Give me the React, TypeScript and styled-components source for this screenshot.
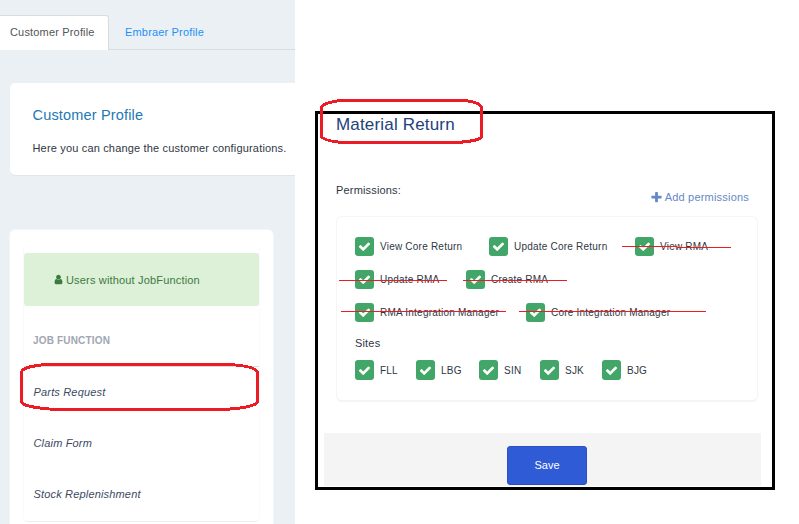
import React from "react";
import styled, { createGlobalStyle } from "styled-components";

const GlobalStyle = createGlobalStyle`
  * { box-sizing: border-box; }
  body {
    margin: 0;
    background: #fff;
    font-family: "Liberation Sans", Arial, sans-serif;
    font-size: 11px;
    letter-spacing: 0.17px;
    color: #2f3744;
    overflow: hidden;
  }
`;

const Page = styled.div`
  position: relative;
  display: flex;
  width: 799px;
  height: 524px;
  overflow: hidden;
`;

const ProfilePane = styled.section`
  width: 295px;
  height: 524px;
  padding-top: 15px;
  overflow: hidden;
  background: #ebf0f4;
`;

const Tabs = styled.nav`
  display: flex;
  height: 35px;
  box-shadow: inset 0 -1px #d9dcde;
`;

const Tab = styled.a<{ $active?: boolean }>`
  padding: 0 14px 0 ${(p) => (p.$active ? "10px" : "16px")};
  width: ${(p) => (p.$active ? "109px" : "auto")};
  line-height: ${(p) => (p.$active ? "33px" : "35px")};
  white-space: nowrap;
  color: ${(p) => (p.$active ? "#555" : "#1e90f8")};
  background: ${(p) => (p.$active ? "#fff" : "transparent")};
  border: ${(p) => (p.$active ? "1px solid #d9dcde" : "0")};
  border-left: 0;
  border-bottom: 0;
  border-radius: 0 3px 0 0;
`;

const IntroCard = styled.div`
  width: 300px;
  height: 92px;
  margin: 33px 0 0 10px;
  padding: 23px 0 0 22.5px;
  background: #fff;
  border-radius: 5px;
  box-shadow: 0 1px 1px #dfe4e8;
  white-space: nowrap;
`;

const IntroTitle = styled.h2`
  margin: 0 0 15px;
  font-size: 14.5px;
  line-height: 18px;
  font-weight: 400;
  color: #2279b4;
`;

const IntroText = styled.p`
  margin: 0;
  line-height: 18px;
`;

const JobCard = styled.div`
  width: 265px;
  height: 310px;
  margin: 54px 0 0 9px;
  padding: 15px 13px 0;
  background: #fff;
  border: 1px solid #f3f6f8;
  border-radius: 6px;
`;

const JobPanel = styled.div`
  height: 277px;
  padding-top: 8px;
  border: 1px solid #f9fafb;
  border-top: 0;
  border-bottom-color: #eceeef;
  border-radius: 5px;
`;

const SuccessBanner = styled.div`
  display: flex;
  align-items: center;
  gap: 2px;
  height: 53px;
  padding-left: 29px;
  color: #3c7a40;
  background: #ddf0d8;
  border-radius: 3px;
`;

const JobHeading = styled.div`
  height: 61px;
  padding: 26px 0 0 9px;
  line-height: 18px;
  font-size: 10px;
  font-weight: 700;
  color: #a1a6b3;
  border-bottom: 1px solid #d9dcdf;
`;

const JobRow = styled.div`
  height: 51px;
  padding-left: 9.5px;
  line-height: 51px;
  font-style: italic;
  color: #3d4963;
`;

const Dialog = styled.section`
  display: flex;
  flex-direction: column;
  width: 460px;
  height: 379px;
  margin: 111px 0 0 20px;
  padding: 0 11px 1px 6px;
  border: 3px solid #000;
`;

const DialogTitle = styled.h1`
  margin: 0;
  padding-left: 12px;
  font-size: 17px;
  line-height: 22px;
  font-weight: 400;
  color: #21427c;
`;

const PermissionsBar = styled.div`
  display: flex;
  justify-content: space-between;
  height: 20px;
  margin: 45px 12px 0 12px;
  line-height: 18px;
`;

const AddLink = styled.a`
  display: flex;
  align-items: center;
  gap: 2px;
  margin-top: 7px;
  height: 18px;
  letter-spacing: 0.2px;
  color: #6488c6;
`;

const PermissionCard = styled.div`
  height: 186px;
  flex: none;
  margin: 15px 3px 0 12px;
  padding: 20px 0 0 18px;
  border: 1px solid #f5f5f6;
  border-bottom: 2px solid #f3f4f5;
  border-radius: 6px;
`;

const OptionRow = styled.div`
  display: flex;
  height: 33px;
`;

const Option = styled.label<{ $width: number; $tall?: boolean }>`
  display: flex;
  gap: 6px;
  width: ${(p) => p.$width}px;
  height: ${(p) => (p.$tall ? 20 : 19)}px;
  line-height: ${(p) => (p.$tall ? 21 : 20)}px;
  font-size: 10px;
  letter-spacing: 0.22px;
  white-space: nowrap;
`;

const CheckBox = styled.span`
  display: flex;
  align-items: center;
  justify-content: center;
  flex: none;
  width: 19px;
  height: 100%;
  background: #42a668;
  border-radius: 3px;
`;

const SitesLabel = styled.div`
  height: 24px;
  line-height: 15px;
`;

const Footer = styled.footer`
  display: flex;
  justify-content: center;
  height: 53px;
  margin-top: 31px;
  padding: 13px 0 1px 9px;
  background: #f4f4f4;
`;

const SaveButton = styled.button`
  width: 80px;
  height: 39px;
  padding: 0 0 2px;
  font: 400 11px "Liberation Sans", Arial, sans-serif;
  letter-spacing: 0;
  color: #fff;
  background: #305bd6;
  border: 1px solid #2a50c2;
  border-radius: 3px;
`;

const Markup = styled.svg`
  position: absolute;
  inset: 0;
  pointer-events: none;
`;

const icons = {
  check:
    "M1671 566q0 40-28 68l-724 724-136 136q-28 28-68 28t-68-28l-136-136-362-362q-28-28-28-68t28-68l136-136q28-28 68-28t68 28l294 295 656-657q28-28 68-28t68 28l136 136q28 28 28 68z",
  plus:
    "M1600 736v192q0 40-28 68t-68 28h-416v416q0 40-28 68t-68 28h-192q-40 0-68-28t-28-68v-416h-416q-40 0-68-28t-28-68v-192q0-40 28-68t68-28h416v-416q0-40 28-68t68-28h192q40 0 68 28t28 68v416h416q40 0 68 28t28 68z",
  user:
    "M1536 1399q0 109-62.5 187t-150.5 78h-854q-88 0-150.5-78t-62.5-187q0-85 8.5-160.5t31.5-152 58.5-131 94-89 134.5-34.5q131 128 313 128t313-128q76 0 134.5 34.5t94 89 58.5 131 31.5 152 8.5 160.5zm-256-887q0 159-112.5 271.5t-271.5 112.5-271.5-112.5-112.5-271.5 112.5-271.5 271.5-112.5 271.5 112.5 112.5 271.5z",
};

function Icon({ name, size, color = "currentColor" }: { name: keyof typeof icons; size: number; color?: string }) {
  return (
    <svg width={size} height={size} viewBox="0 0 1792 1792" fill={color}>
      <path d={icons[name]} />
    </svg>
  );
}

type Item = [label: string, width: number];

const permissionRows: Item[][] = [
  [["View Core Return", 134], ["Update Core Return", 146], ["View RMA", 90]],
  [["Update RMA", 111], ["Create RMA", 100]],
  [["RMA Integration Manager", 171], ["Core Integration Manager", 160]],
];

const sites: Item[] = [["FLL", 61], ["LBG", 63], ["SIN", 61], ["SJK", 62], ["BJG", 60]];

function Options({ items, tall }: { items: Item[]; tall?: boolean }) {
  return (
    <OptionRow>
      {items.map(([label, width]) => (
        <Option key={label} $width={width} $tall={tall}>
          <CheckBox>
            <Icon name="check" size={13} color="#fff" />
          </CheckBox>
          {label}
        </Option>
      ))}
    </OptionRow>
  );
}

export default function App() {
  return (
    <Page>
      <GlobalStyle />
      <ProfilePane>
        <Tabs>
          <Tab $active>Customer Profile</Tab>
          <Tab>Embraer Profile</Tab>
        </Tabs>
        <IntroCard>
          <IntroTitle>Customer Profile</IntroTitle>
          <IntroText>Here you can change the customer configurations.</IntroText>
        </IntroCard>
        <JobCard>
          <JobPanel>
            <SuccessBanner>
              <Icon name="user" size={11} />
              Users without JobFunction
            </SuccessBanner>
            <JobHeading>JOB FUNCTION</JobHeading>
            <JobRow>Parts Request</JobRow>
            <JobRow>Claim Form</JobRow>
            <JobRow>Stock Replenishment</JobRow>
          </JobPanel>
        </JobCard>
      </ProfilePane>
      <Dialog>
        <DialogTitle>Material Return</DialogTitle>
        <PermissionsBar>
          <span>Permissions:</span>
          <AddLink>
            <Icon name="plus" size={13} />
            Add permissions
          </AddLink>
        </PermissionsBar>
        <PermissionCard>
          {permissionRows.map((row) => (
            <Options key={row[0][0]} items={row} />
          ))}
          <SitesLabel>Sites</SitesLabel>
          <Options items={sites} tall />
        </PermissionCard>
        <Footer>
          <SaveButton>Save</SaveButton>
        </Footer>
      </Dialog>
      <Markup width="799" height="524" fill="none" stroke="#ed1c24" shapeRendering="crispEdges">
        <g strokeWidth="3">
          <path d="M47 364.5H230C245 365.5 257 368 257.5 373V402C256 406 240 409 221 409.5H56C40 408.5 22 406 21.5 402V372C22 368 35 365 47 364.5Z" />
          <path d="M342 100.5H464C474 101.5 481 104 481.5 108V137C480 140 468 142 455 142.5H342C332 141.5 322 140 321.5 136V108C322 104 332 101 342 100.5Z" />
        </g>
        <path d="M622 246.5H677M677 247.5H731M339 280.5H447M463 280.5H567M341 311.5H506M519 311.5H706" />
      </Markup>
    </Page>
  );
}
